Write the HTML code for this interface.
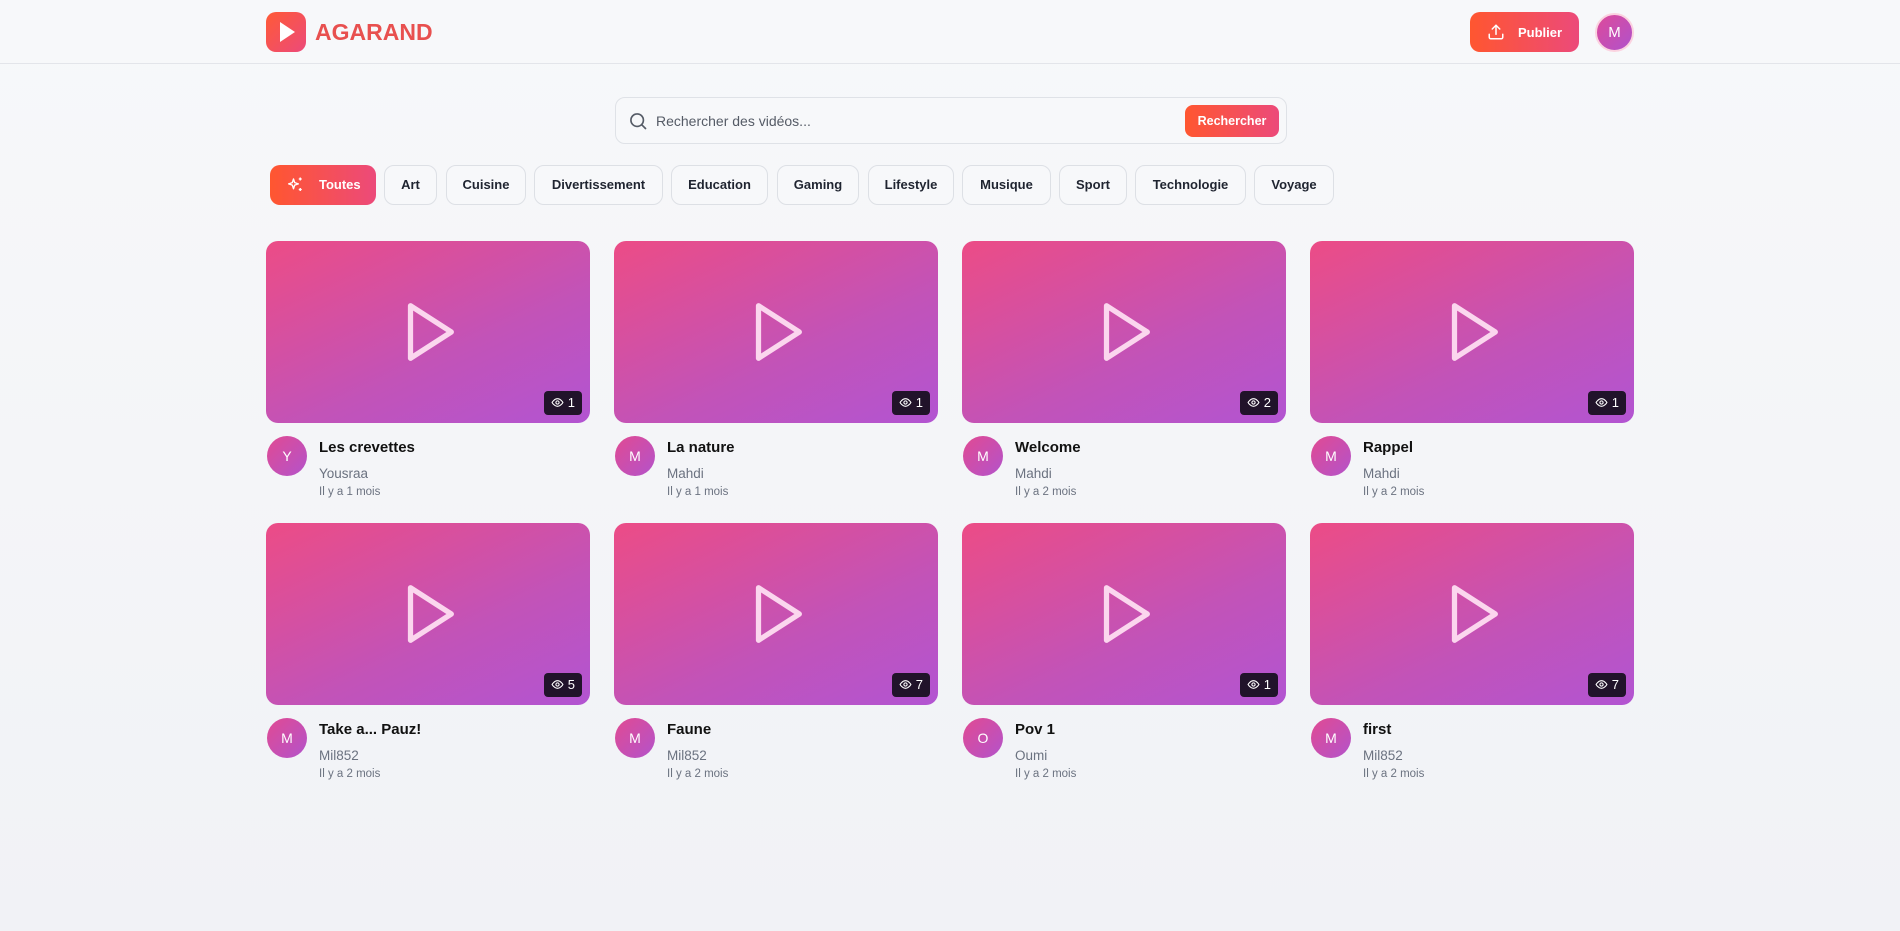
<!DOCTYPE html>
<html><head><meta charset="utf-8"><style>
*{box-sizing:border-box;margin:0;padding:0}
body{width:1900px;height:931px;overflow:hidden;background:linear-gradient(#f7f8fa,#f1f2f6);font-family:"Liberation Sans",sans-serif;color:#111827;position:relative}
.hdr{position:absolute;left:0;top:0;width:1900px;height:64px;border-bottom:1.5px solid #e3e5ea;background:#f7f8fa}
.logo{position:absolute;left:266px;top:12px;width:40px;height:40px;border-radius:10px;background:linear-gradient(135deg,#ff5a36,#ec4a7a)}
.brand{position:absolute;left:315px;top:19px;font-size:23px;font-weight:700;color:#e8504f}
.pub{position:absolute;left:1470px;top:12px;width:109px;height:40px;border-radius:10px;background:linear-gradient(90deg,#ff5630,#ec4a7a);color:#fff;font-weight:700;font-size:13px}
.pub span{position:absolute;left:48px;top:13px}
.av{position:absolute;left:1595px;top:13px;width:39px;height:39px;border-radius:50%;background:linear-gradient(135deg,#dd4a9a,#b052cc);border:2px solid #fbd3e0;color:#fff;font-size:15px;text-align:center;line-height:35px}
.search{position:absolute;left:615px;top:97px;width:672px;height:47px;border:1px solid #dfe2e7;border-radius:10px;background:#f7f8fa}
.search .ph{position:absolute;left:40px;top:15px;font-size:14px;color:#555b66}
.search .btn{position:absolute;left:569px;top:7px;width:94px;height:32px;border-radius:8px;background:linear-gradient(90deg,#ff5630,#ec4a7a);color:#fff;font-size:12.5px;font-weight:700;text-align:center;line-height:32px}
.chip{position:absolute;top:165px;height:40px;border:1px solid #dde0e5;border-radius:10px;background:#f7f8fa;font-size:13px;font-weight:600;color:#1f2430;text-align:center;line-height:38px}
.chip.on{background:linear-gradient(90deg,#ff5630,#ec4a7a);border:none;color:#fff;line-height:40px;text-align:left;padding-left:49px}
.card{position:absolute;width:324px;height:260px}
.th{width:324px;height:182px;border-radius:12px;background:linear-gradient(155deg,#ec4c86,#c253b8 60%,#b254d2);position:relative}
.th svg{position:absolute;left:127px;top:56px}
.bd{position:absolute;right:8px;bottom:8px;height:24px;padding:0 7px;background:#21132a;border-radius:4px;color:#fff;font-size:13px;line-height:24px}
.bd svg{position:static;vertical-align:-2px;margin-right:4px}
.ua{position:absolute;left:1px;top:195px;width:40px;height:40px;border-radius:50%;background:linear-gradient(135deg,#e14a92,#b353cb);color:#fff;font-size:14px;text-align:center;line-height:40px}
.t{position:absolute;left:53px;top:198px;font-size:15px;font-weight:600;color:#111}
.n{position:absolute;left:53px;top:225px;font-size:13.5px;color:#6b7280}
.d{position:absolute;left:53px;top:245px;font-size:11.5px;color:#6b7280}
</style></head><body>
<div class="hdr">
<div class="logo"><svg width="40" height="40" viewBox="0 0 40 40"><path d="M14 10 L29 20 L14 30Z" fill="#fff"/></svg></div>
<div class="brand">AGARAND</div>
<div class="pub"><svg style="position:absolute;left:17px;top:11px" width="18" height="18" viewBox="0 0 24 24" fill="none" stroke="#fff" stroke-width="2" stroke-linecap="round" stroke-linejoin="round"><path d="M21 15v4a2 2 0 0 1-2 2H5a2 2 0 0 1-2-2v-4"/><path d="M17 8l-5-5-5 5"/><path d="M12 3v12"/></svg><span>Publier</span></div>
<div class="av">M</div>
</div>
<div class="search"><svg style="position:absolute;left:12px;top:13px" width="20" height="20" viewBox="0 0 24 24" fill="none" stroke="#555b66" stroke-width="2" stroke-linecap="round"><circle cx="11" cy="11" r="7.5"/><path d="M21 21l-4.3-4.3"/></svg><div class="ph">Rechercher des vidéos...</div><div class="btn">Rechercher</div></div>
<div class="chip on" style="left:270px;width:106px"><svg style="position:absolute;left:16px;top:11px" width="18" height="18" viewBox="0 0 24 24" fill="none" stroke="#fff" stroke-width="1.8" stroke-linejoin="round"><path d="M10 4l1.6 4.8L16.5 10.5l-4.9 1.7L10 17l-1.6-4.8L3.5 10.5l4.9-1.7z"/><path d="M19 2v4M17 4h4M19 16v4M17 18h4"/></svg>Toutes</div>
<div class="chip" style="left:384px;width:53px">Art</div>
<div class="chip" style="left:446px;width:80px">Cuisine</div>
<div class="chip" style="left:534px;width:129px">Divertissement</div>
<div class="chip" style="left:671px;width:97px">Education</div>
<div class="chip" style="left:777px;width:82px">Gaming</div>
<div class="chip" style="left:868px;width:86px">Lifestyle</div>
<div class="chip" style="left:962px;width:89px">Musique</div>
<div class="chip" style="left:1059px;width:68px">Sport</div>
<div class="chip" style="left:1135px;width:111px">Technologie</div>
<div class="chip" style="left:1254px;width:80px">Voyage</div>

<div class="card" style="left:266px;top:241px"><div class="th"><svg width="70" height="70" viewBox="0 0 24 24" fill="none" stroke="#fbd6ee" stroke-width="1.8" stroke-linejoin="round"><path d="M6 3l14 9-14 9z"/></svg><div class="bd"><svg width="13" height="13" viewBox="0 0 24 24" fill="none" stroke="#fff" stroke-width="2"><path d="M2 12s4-7 10-7 10 7 10 7-4 7-10 7S2 12 2 12z"/><circle cx="12" cy="12" r="3"/></svg>1</div></div><div class="ua">Y</div><div class="t">Les crevettes</div><div class="n">Yousraa</div><div class="d">Il y a 1 mois</div></div>
<div class="card" style="left:614px;top:241px"><div class="th"><svg width="70" height="70" viewBox="0 0 24 24" fill="none" stroke="#fbd6ee" stroke-width="1.8" stroke-linejoin="round"><path d="M6 3l14 9-14 9z"/></svg><div class="bd"><svg width="13" height="13" viewBox="0 0 24 24" fill="none" stroke="#fff" stroke-width="2"><path d="M2 12s4-7 10-7 10 7 10 7-4 7-10 7S2 12 2 12z"/><circle cx="12" cy="12" r="3"/></svg>1</div></div><div class="ua">M</div><div class="t">La nature</div><div class="n">Mahdi</div><div class="d">Il y a 1 mois</div></div>
<div class="card" style="left:962px;top:241px"><div class="th"><svg width="70" height="70" viewBox="0 0 24 24" fill="none" stroke="#fbd6ee" stroke-width="1.8" stroke-linejoin="round"><path d="M6 3l14 9-14 9z"/></svg><div class="bd"><svg width="13" height="13" viewBox="0 0 24 24" fill="none" stroke="#fff" stroke-width="2"><path d="M2 12s4-7 10-7 10 7 10 7-4 7-10 7S2 12 2 12z"/><circle cx="12" cy="12" r="3"/></svg>2</div></div><div class="ua">M</div><div class="t">Welcome</div><div class="n">Mahdi</div><div class="d">Il y a 2 mois</div></div>
<div class="card" style="left:1310px;top:241px"><div class="th"><svg width="70" height="70" viewBox="0 0 24 24" fill="none" stroke="#fbd6ee" stroke-width="1.8" stroke-linejoin="round"><path d="M6 3l14 9-14 9z"/></svg><div class="bd"><svg width="13" height="13" viewBox="0 0 24 24" fill="none" stroke="#fff" stroke-width="2"><path d="M2 12s4-7 10-7 10 7 10 7-4 7-10 7S2 12 2 12z"/><circle cx="12" cy="12" r="3"/></svg>1</div></div><div class="ua">M</div><div class="t">Rappel</div><div class="n">Mahdi</div><div class="d">Il y a 2 mois</div></div>

<div class="card" style="left:266px;top:523px"><div class="th"><svg width="70" height="70" viewBox="0 0 24 24" fill="none" stroke="#fbd6ee" stroke-width="1.8" stroke-linejoin="round"><path d="M6 3l14 9-14 9z"/></svg><div class="bd"><svg width="13" height="13" viewBox="0 0 24 24" fill="none" stroke="#fff" stroke-width="2"><path d="M2 12s4-7 10-7 10 7 10 7-4 7-10 7S2 12 2 12z"/><circle cx="12" cy="12" r="3"/></svg>5</div></div><div class="ua">M</div><div class="t">Take a... Pauz!</div><div class="n">Mil852</div><div class="d">Il y a 2 mois</div></div>
<div class="card" style="left:614px;top:523px"><div class="th"><svg width="70" height="70" viewBox="0 0 24 24" fill="none" stroke="#fbd6ee" stroke-width="1.8" stroke-linejoin="round"><path d="M6 3l14 9-14 9z"/></svg><div class="bd"><svg width="13" height="13" viewBox="0 0 24 24" fill="none" stroke="#fff" stroke-width="2"><path d="M2 12s4-7 10-7 10 7 10 7-4 7-10 7S2 12 2 12z"/><circle cx="12" cy="12" r="3"/></svg>7</div></div><div class="ua">M</div><div class="t">Faune</div><div class="n">Mil852</div><div class="d">Il y a 2 mois</div></div>
<div class="card" style="left:962px;top:523px"><div class="th"><svg width="70" height="70" viewBox="0 0 24 24" fill="none" stroke="#fbd6ee" stroke-width="1.8" stroke-linejoin="round"><path d="M6 3l14 9-14 9z"/></svg><div class="bd"><svg width="13" height="13" viewBox="0 0 24 24" fill="none" stroke="#fff" stroke-width="2"><path d="M2 12s4-7 10-7 10 7 10 7-4 7-10 7S2 12 2 12z"/><circle cx="12" cy="12" r="3"/></svg>1</div></div><div class="ua">O</div><div class="t">Pov 1</div><div class="n">Oumi</div><div class="d">Il y a 2 mois</div></div>
<div class="card" style="left:1310px;top:523px"><div class="th"><svg width="70" height="70" viewBox="0 0 24 24" fill="none" stroke="#fbd6ee" stroke-width="1.8" stroke-linejoin="round"><path d="M6 3l14 9-14 9z"/></svg><div class="bd"><svg width="13" height="13" viewBox="0 0 24 24" fill="none" stroke="#fff" stroke-width="2"><path d="M2 12s4-7 10-7 10 7 10 7-4 7-10 7S2 12 2 12z"/><circle cx="12" cy="12" r="3"/></svg>7</div></div><div class="ua">M</div><div class="t">first</div><div class="n">Mil852</div><div class="d">Il y a 2 mois</div></div>
</body></html>
